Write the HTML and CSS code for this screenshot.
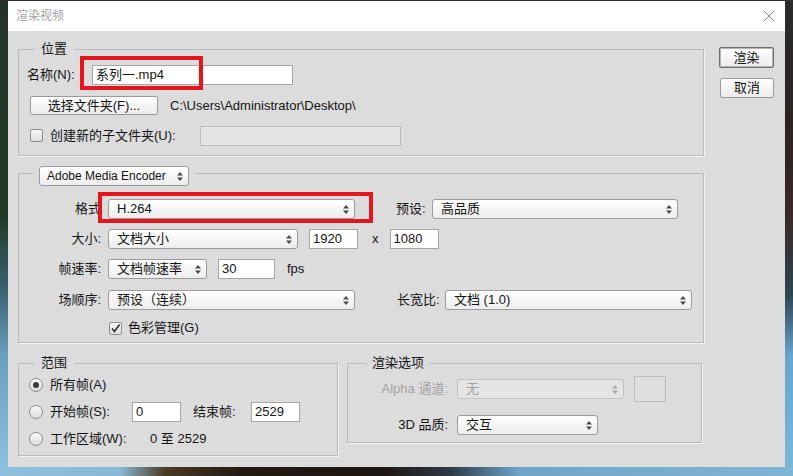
FILE: index.html
```html
<!DOCTYPE html>
<html lang="zh-CN">
<head>
<meta charset="utf-8">
<title>渲染视频</title>
<link rel="stylesheet" href="styles.css">
</head>
<body>
<div class="dialog">
  <div class="titlebar">
    <span class="title">渲染视频</span>
    <svg class="close" width="12" height="12" viewBox="0 0 12 12"><path d="M0.5 0.5 L11.5 11.5 M11.5 0.5 L0.5 11.5" stroke="#8c8c8c" stroke-width="1" fill="none"/></svg>
  </div>
  <div class="content">
    <div class="main">
      <fieldset class="grp g-loc">
        <legend class="lg">位置</legend>
        <div class="body">
          <div class="row r-name">
            <span class="lbl-name">名称(N):</span>
            <div class="field f-name">系列一.mp4</div>
            <div class="hl hl-name"></div>
          </div>
          <div class="row r-folder">
            <div class="btn btn-folder">选择文件夹(F)...</div>
            <span class="path">C:\Users\Administrator\Desktop\</span>
          </div>
          <div class="row r-sub">
            <span class="chk"></span>
            <span class="lbl-sub">创建新的子文件夹(U):</span>
            <div class="field field-off f-sub"></div>
          </div>
        </div>
      </fieldset>

      <fieldset class="grp g-enc">
        <legend class="lg-enc">
          <div class="sel s-enc"><span>Adobe Media Encoder</span><svg class="arr" width="6" height="9" viewBox="0 0 6 9"><path d="M3 0 L6 3.5 H0Z M3 9 L0 5.5 H6Z" fill="#4a4a4a"/></svg></div>
        </legend>
        <div class="body">
          <div class="frow r-fmt">
            <span class="flabel">格式</span>
            <div class="sel s-fmt"><span>H.264</span><svg class="arr" width="6" height="9" viewBox="0 0 6 9"><path d="M3 0 L6 3.5 H0Z M3 9 L0 5.5 H6Z" fill="#4a4a4a"/></svg></div>
            <span class="lbl-preset">预设:</span>
            <div class="sel s-preset"><span>高品质</span><svg class="arr" width="6" height="9" viewBox="0 0 6 9"><path d="M3 0 L6 3.5 H0Z M3 9 L0 5.5 H6Z" fill="#4a4a4a"/></svg></div>
            <div class="hl hl-fmt"></div>
          </div>
          <div class="frow r-size">
            <span class="flabel">大小:</span>
            <div class="sel s-size"><span>文档大小</span><svg class="arr" width="6" height="9" viewBox="0 0 6 9"><path d="M3 0 L6 3.5 H0Z M3 9 L0 5.5 H6Z" fill="#4a4a4a"/></svg></div>
            <div class="field f-num f-w">1920</div>
            <span class="times">x</span>
            <div class="field f-num">1080</div>
          </div>
          <div class="frow r-rate">
            <span class="flabel">帧速率:</span>
            <div class="sel s-rate"><span>文档帧速率</span><svg class="arr" width="6" height="9" viewBox="0 0 6 9"><path d="M3 0 L6 3.5 H0Z M3 9 L0 5.5 H6Z" fill="#4a4a4a"/></svg></div>
            <div class="field f-fps">30</div>
            <span class="fps">fps</span>
          </div>
          <div class="frow r-field">
            <span class="flabel">场顺序:</span>
            <div class="sel s-order"><span>预设（连续）</span><svg class="arr" width="6" height="9" viewBox="0 0 6 9"><path d="M3 0 L6 3.5 H0Z M3 9 L0 5.5 H6Z" fill="#4a4a4a"/></svg></div>
            <span class="lbl-aspect">长宽比:</span>
            <div class="sel s-aspect"><span>文档 (1.0)</span><svg class="arr" width="6" height="9" viewBox="0 0 6 9"><path d="M3 0 L6 3.5 H0Z M3 9 L0 5.5 H6Z" fill="#4a4a4a"/></svg></div>
          </div>
          <div class="frow r-color">
            <span class="chk chk-on"><svg width="11" height="11" viewBox="0 0 11 11"><path d="M2 5.5 L4.5 8.5 L9.5 1.5" stroke="#2a2a2a" stroke-width="1.6" fill="none"/></svg></span>
            <span class="lbl-color">色彩管理(G)</span>
          </div>
        </div>
      </fieldset>

      <div class="bottom">
        <fieldset class="grp g-range">
          <legend class="lg">范围</legend>
          <div class="body">
            <div class="rrow">
              <span class="radio radio-on"></span>
              <span>所有帧(A)</span>
            </div>
            <div class="rrow">
              <span class="radio"></span>
              <span class="lbl-start">开始帧(S):</span>
              <div class="field f-num">0</div>
              <span class="lbl-end">结束帧:</span>
              <div class="field f-num">2529</div>
            </div>
            <div class="rrow">
              <span class="radio"></span>
              <span class="lbl-work">工作区域(W):</span>
              <span>0 至 2529</span>
            </div>
          </div>
        </fieldset>

        <fieldset class="grp g-opt">
          <legend class="lg lg-opt">渲染选项</legend>
          <div class="body">
            <div class="orow r-alpha">
              <span class="olabel off">Alpha 通道:</span>
              <div class="sel sel-off s-alpha"><span>无</span><svg class="arr" width="6" height="9" viewBox="0 0 6 9"><path d="M3 0 L6 3.5 H0Z M3 9 L0 5.5 H6Z" fill="#a8a8a8"/></svg></div>
              <div class="swatch"></div>
            </div>
            <div class="orow r-3d">
              <span class="olabel">3D 品质:</span>
              <div class="sel s-3d"><span>交互</span><svg class="arr" width="6" height="9" viewBox="0 0 6 9"><path d="M3 0 L6 3.5 H0Z M3 9 L0 5.5 H6Z" fill="#4a4a4a"/></svg></div>
            </div>
          </div>
        </fieldset>
      </div>
    </div>

    <div class="side">
      <div class="btn btn-render">渲染</div>
      <div class="btn btn-cancel">取消</div>
    </div>
  </div>
</div>
</body>
</html>
```

FILE: styles.css
```css
* { box-sizing: border-box; }

html, body { margin: 0; padding: 0; }

body {
  width: 793px;
  height: 476px;
  overflow: hidden;
  font: 13px/16px "Liberation Sans", "Noto Sans CJK SC", sans-serif;
  color: #141414;
  background:
    linear-gradient(#2d2d2d, #2d2d2d) left top / 100% 1px no-repeat,
    linear-gradient(to right, #8cc0dd 0, #86b9d6 120px, #4a3a22 165px, #241a12 240px, #1c1510 380px, #2d3a46 450px, #6da6c9 520px, #7fb6d6 100%) left bottom / 100% 10px no-repeat,
    linear-gradient(to bottom, #2b2b2b 0, #2c2222 25%, #3a2826 45%, #2c4652 62%, #68a5cb 75%, #7db8d9 100%) right top / 8px 100% no-repeat,
    linear-gradient(to bottom, #25342a 0, #1f3a27 45%, #38606c 60%, #6a9fc0 75%, #8dc3e1 100%) left top / 8px 100% no-repeat,
    #6a9fc0;
}

.dialog {
  margin: 1px 0 0 8px;
  width: 777px;
  height: 466px;
  background: #dcdcdc;
}

.titlebar {
  height: 30px;
  background: #ffffff;
  display: flex;
  align-items: center;
  justify-content: space-between;
  padding: 0 10px 0 8px;
}

.title {
  font-size: 12px;
  color: #a3a3a3;
}

.content {
  display: flex;
  padding: 0 11px 0 10px;
}

.main {
  width: 686px;
  padding-top: 10px;
}

.side {
  margin-left: 15px;
  padding-top: 16px;
  display: flex;
  flex-direction: column;
  align-items: flex-start;
}

/* group boxes */
.grp {
  margin: 0;
  padding: 0;
  min-width: 0;
  border: 1px solid #bababa;
  box-shadow: 1px 1px 0 #f3f3f3;
}

.lg {
  padding: 0 7px;
  margin-left: 15px;
  line-height: 16px;
}

.lg-opt {
  padding: 0 5px;
  margin-left: 19px;
}

.lg-enc {
  padding: 6px 6px 0;
  margin-left: 14px;
}

.row { display: flex; align-items: center; position: relative; }

/* 位置 */
.g-loc .body { padding: 7px 0 9px 8px; }

.r-name { height: 21px; }
.lbl-name { width: 65px; }
.f-name { width: 201px; height: 21px; }

.r-folder { height: 19px; margin-top: 11px; padding-left: 3px; }
.path { margin-left: 12px; }

.r-sub { height: 21px; margin-top: 10px; padding-left: 3px; }
.lbl-sub { margin-left: 7px; width: 150px; }
.f-sub { width: 201px; height: 21px; }

/* fields */
.field {
  background: #ffffff;
  border: 1px solid #a6a6a6;
  padding: 0 3px;
  display: flex;
  align-items: center;
  height: 20px;
}

.field-off {
  background: #e4e4e4;
  border-color: #bdbdbd;
}

.btn {
  border: 1px solid #9a9a9a;
  border-radius: 2px;
  background: linear-gradient(#fefefe, #ececec);
  display: flex;
  align-items: center;
  justify-content: center;
}

.btn-folder { width: 128px; height: 19px; }

.btn-render {
  width: 55px;
  height: 21px;
  border-color: #6e6e6e;
  box-shadow: inset 0 0 0 1px #b4b4b4;
}

.btn-cancel {
  width: 54px;
  height: 20px;
  margin-top: 10px;
  margin-left: 1px;
}

/* highlight annotations */
.hl {
  position: absolute;
  border: 4px solid #e5161b;
  pointer-events: none;
}

.hl-name { left: 53px; top: -8px; width: 123px; height: 34px; }
.hl-fmt { left: 79px; top: -7px; width: 275px; height: 31px; }

/* select */
.sel {
  height: 20px;
  border: 1px solid #9c9c9c;
  border-radius: 3px;
  background: linear-gradient(#ffffff, #ededed);
  display: flex;
  align-items: center;
  justify-content: space-between;
  padding: 0 5px 0 8px;
  white-space: nowrap;
}

.sel-off {
  background: #e4e4e4;
  border-color: #c2c2c2;
  color: #a3a3a3;
}

.arr { flex: none; }

.s-enc { width: 150px; height: 20px; font-size: 12px; padding-left: 7px; }

/* encoder group */
.g-enc { margin-top: 4px; }
.g-enc .body { padding: 13px 0 6px 0; }

.frow { display: flex; align-items: center; height: 20px; position: relative; }
.r-size, .r-rate { margin-top: 10px; }
.r-field { margin-top: 11px; }
.r-color { margin-top: 10px; height: 16px; padding-left: 90px; }

.flabel { width: 82px; margin-right: 7px; text-align: right; }

.s-fmt, .s-order { width: 247px; }
.s-preset { width: 246px; }
.s-aspect { width: 247px; }
.s-size { width: 190px; }
.s-rate { width: 99px; }

.lbl-preset { margin-left: 41px; width: 36px; }
.lbl-aspect { margin-left: 42px; width: 48px; }

.f-num { width: 49px; }
.f-w { margin-left: 11px; }
.times { margin: 0 11px 0 14px; }
.f-fps { width: 57px; margin-left: 11px; }
.fps { margin-left: 12px; }

.lbl-color { margin-left: 6px; }

/* checkbox & radio */
.chk {
  width: 13px;
  height: 13px;
  flex: none;
  border: 1px solid #8e8e8e;
  border-radius: 2px;
  background: linear-gradient(#f7f7f7, #dedede);
  display: flex;
  align-items: center;
  justify-content: center;
}

.radio {
  width: 14px;
  height: 14px;
  flex: none;
  border: 1px solid #8e8e8e;
  border-radius: 50%;
  background: linear-gradient(#fafafa, #dcdcdc);
  display: flex;
  align-items: center;
  justify-content: center;
  margin-right: 7px;
}

.radio-on::after {
  content: "";
  width: 6px;
  height: 6px;
  border-radius: 50%;
  background: #3a3a3a;
}

/* bottom groups */
.bottom {
  display: flex;
  align-items: flex-start;
  gap: 9px;
  margin-top: 12px;
}

.g-range { width: 320px; }
.g-range .body { padding: 4px 0 6px 10px; }

.rrow { display: flex; align-items: center; height: 20px; }
.rrow + .rrow { margin-top: 7px; }

.lbl-start { width: 82px; }
.lbl-end { margin-left: 12px; width: 58px; }
.lbl-work { width: 100px; }

.g-opt { width: 355px; }
.g-opt .body { padding: 5px 0 7px 0; }

.orow { display: flex; align-items: center; }
.r-alpha { height: 26px; }
.r-3d { height: 20px; margin-top: 13px; }

.olabel { width: 100px; margin-right: 9px; text-align: right; }
.off { color: #a3a3a3; }

.s-alpha { width: 167px; }
.s-3d { width: 141px; }

.swatch {
  width: 32px;
  height: 26px;
  margin-left: 10px;
  border: 1px solid #bdbdbd;
  background: #dedede;
}
```
